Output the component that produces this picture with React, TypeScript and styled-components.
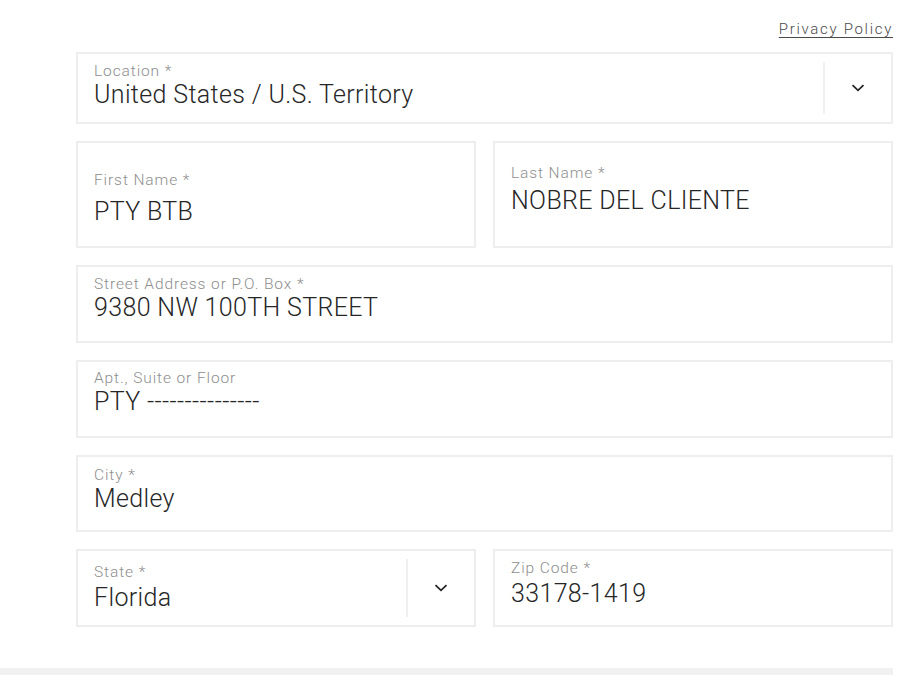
import React from "react";
import styled, { createGlobalStyle } from "styled-components";

const GlobalStyle = createGlobalStyle`
  body {
    margin: 0;
    background: #ffffff;
    font-family: Roboto, "Liberation Sans", Arial, sans-serif;
    color: #2a2a2a;
  }
`;

const SPage = styled.div`
  width: 893px;
  height: 675px;
  display: flex;
  flex-direction: column;
`;

const SForm = styled.div`
  padding: 20px 0 0 76px;
  display: flex;
  flex-direction: column;
  gap: 17px;
  flex: 1;
`;

const STopRow = styled.div`
  display: flex;
  justify-content: flex-end;
  height: 18px;
  margin-bottom: -3px;
`;

const SPrivacy = styled.a`
  font-size: 15px;
  line-height: 18px;
  font-weight: 300;
  color: #4a4a4a;
  text-decoration: underline;
  text-underline-offset: 3px;
  letter-spacing: 1.7px;
  cursor: pointer;
`;

const SRow = styled.div`
  display: grid;
  grid-template-columns: 1fr 1fr;
  gap: 17px;
`;

interface IFieldStyle {
  height: number;
  padTop?: number;
  gap?: number;
}

const SField = styled.div<IFieldStyle>`
  box-sizing: border-box;
  height: ${({ height }) => height}px;
  border: 2px solid #eeeeee;
  display: flex;
  align-items: stretch;
  background: #fff;
`;

const SFieldBody = styled.div<IFieldStyle>`
  flex: 1;
  padding: ${({ padTop }) => (padTop ?? 11) - 2}px 16px 0 16px;
  display: flex;
  flex-direction: column;
  gap: ${({ gap }) => gap ?? 3}px;
`;

const SLabel = styled.div`
  font-size: 15.5px;
  line-height: 16px;
  font-weight: 300;
  color: #8e8e8e;
  letter-spacing: 0.9px;
`;

const SValue = styled.div`
  font-size: 25px;
  line-height: 26px;
  font-weight: 300;
  color: #262626;
  letter-spacing: 0.35px;
  white-space: nowrap;
`;

const SSelectZone = styled.div`
  width: 66px;
  display: flex;
  align-items: center;
  justify-content: center;
  border-left: 2px solid #f0f0f0;
  margin: 8px 0;
`;

const SDivider = styled.div`
  height: 7px;
  background: #f1f1f1;
`;

const Chevron = () => (
  <svg width="14" height="8" viewBox="0 0 14 8">
    <path d="M1.5 1.2 L7 6.3 L12.5 1.2" fill="none" stroke="#222" strokeWidth="1.7" />
  </svg>
);

interface IFieldProps {
  label: string;
  value: string;
  height: number;
  padTop?: number;
  gap?: number;
  select?: boolean;
}

const Field = ({ label, value, height, padTop, gap, select }: IFieldProps) => (
  <SField height={height}>
    <SFieldBody height={height} padTop={padTop} gap={gap}>
      <SLabel>{label}</SLabel>
      <SValue>{value}</SValue>
    </SFieldBody>
    {select && (
      <SSelectZone>
        <Chevron />
      </SSelectZone>
    )}
  </SField>
);

const App = () => {
  return (
    <>
      <GlobalStyle />
      <SPage>
        <SForm>
          <STopRow>
            <SPrivacy>Privacy Policy</SPrivacy>
          </STopRow>
          <Field label="Location *" value="United States / U.S. Territory" height={72} select />
          <SRow>
            <Field label="First Name *" value="PTY BTB" height={107} padTop={31} gap={11} />
            <Field label="Last Name *" value="NOBRE DEL CLIENTE" height={107} padTop={24} gap={7} />
          </SRow>
          <Field label="Street Address or P.O. Box *" value="9380 NW 100TH STREET" height={78} padTop={11} gap={3} />
          <Field label="Apt., Suite or Floor" value="PTY ---------------" height={78} padTop={10} gap={3} />
          <Field label="City *" value="Medley" height={77} padTop={12} gap={3} />
          <SRow>
            <Field label="State *" value="Florida" height={78} padTop={15} gap={5} select />
            <Field label="Zip Code *" value="33178-1419" height={78} padTop={11} gap={5} />
          </SRow>
        </SForm>
        <SDivider />
      </SPage>
    </>
  );
};

export default App;
